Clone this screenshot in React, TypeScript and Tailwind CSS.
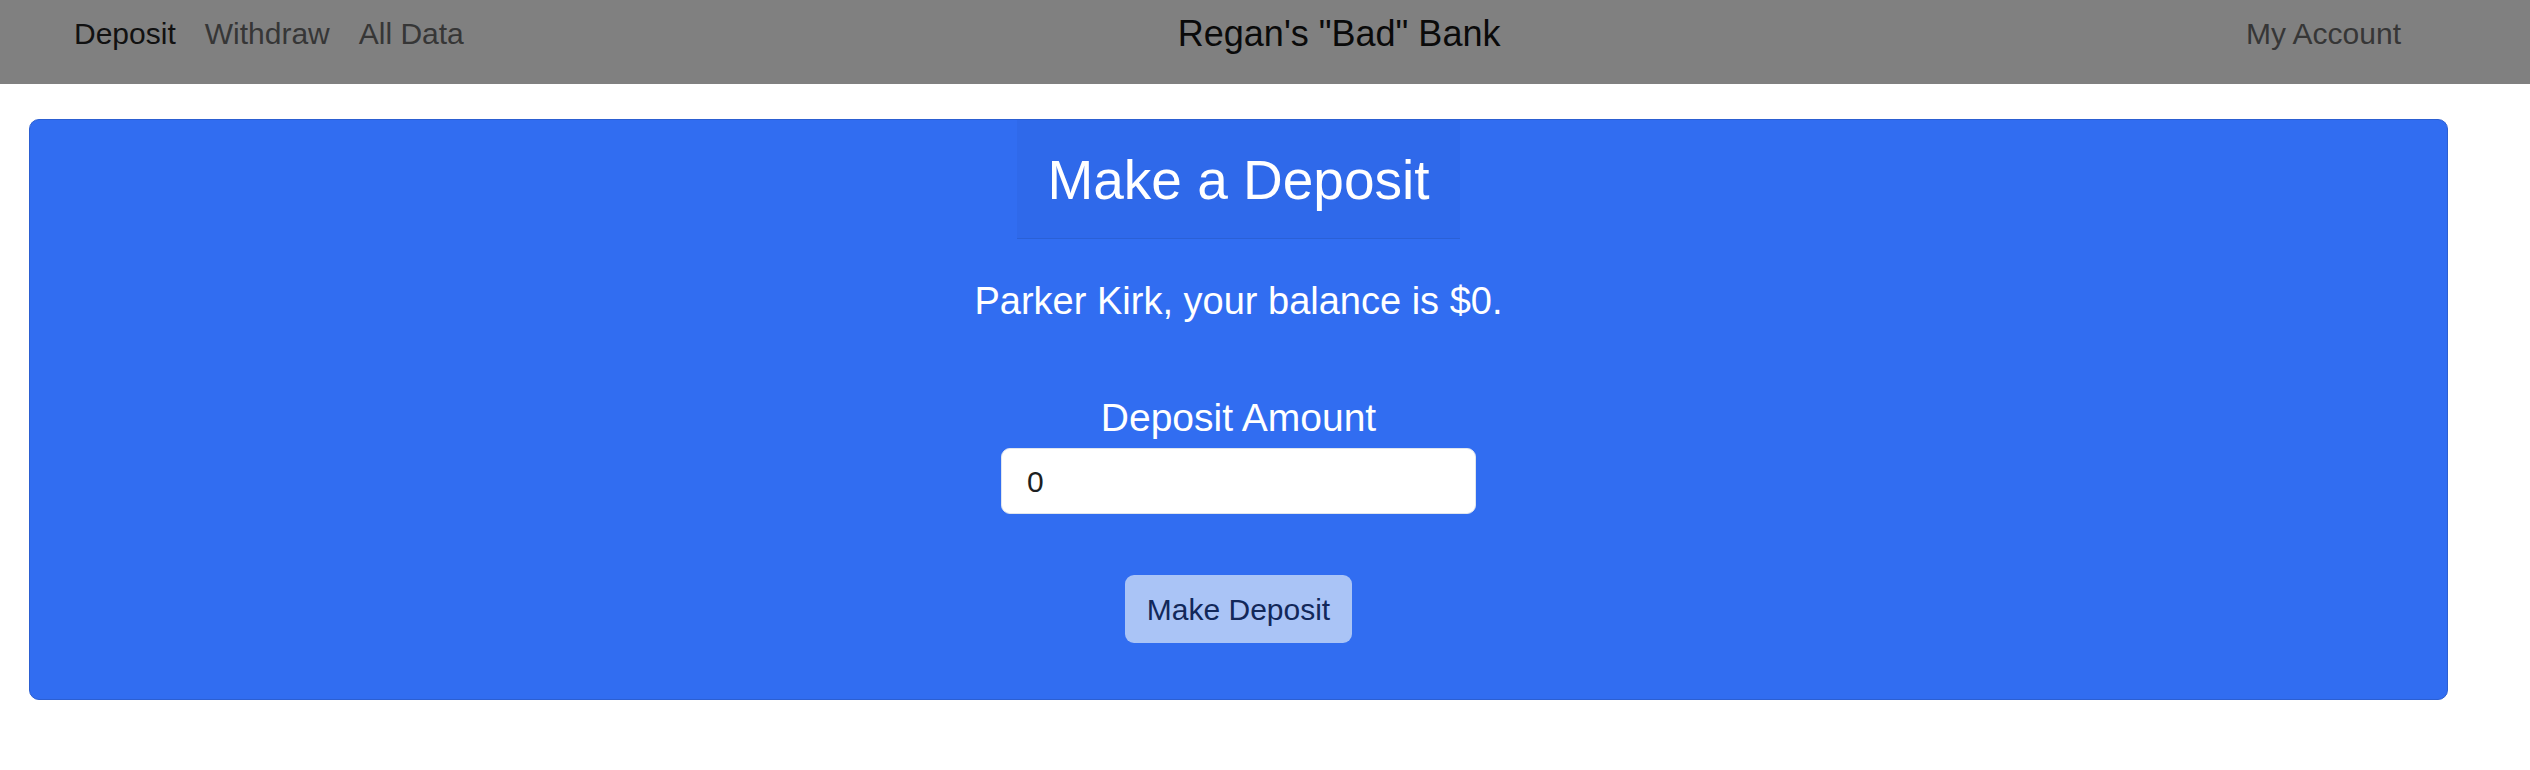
import React from "react";

export default function App() {
  const font = { fontFamily: '"Liberation Sans", Arial, sans-serif' };
  return (
    <div className="min-h-[770px] w-[2530px] bg-white" style={font}>
      <nav className="flex h-[84px] items-start bg-[#808080]">
        <div className="flex gap-[29px] pl-[74px] pt-[14px] text-[30px] leading-[40px]">
          <span className="text-[#111]">Deposit</span>
          <span className="text-[#363636]">Withdraw</span>
          <span className="text-[#363636]">All Data</span>
        </div>
        <div className="ml-[714px] mt-[14px] text-[36px] leading-[40px] text-[#0a0a0a]">
          Regan's "Bad" Bank
        </div>
        <div className="ml-auto pr-[129px] pt-[14px] text-[30px] leading-[40px] text-[#363636]">
          My Account
        </div>
      </nav>

      <div className="pl-[29px] pt-[35px]">
        <div className="flex h-[581px] w-[2419px] flex-col items-center rounded-[10px] border border-[#2c5fd2] bg-[#316df1]">
          <div className="border-b border-[#2a60d6] bg-[#2f69ea] px-[30px] pt-[30px] pb-[28px]">
            <h1 className="text-[55px] leading-[60px] text-white">Make a Deposit</h1>
          </div>
          <p className="mt-[40px] text-[38px] leading-[44px] text-white">
            Parker Kirk, your balance is $0.
          </p>
          <label className="mt-[73px] text-[39px] leading-[44px] text-white">
            Deposit Amount
          </label>
          <div className="mt-[8px] flex h-[66px] w-[475px] items-center rounded-[9px] border border-[#dfe5ee] bg-white pl-[25px] text-[30px] text-[#1d1f22]">
            0
          </div>
          <button className="mt-[61px] h-[68px] w-[227px] rounded-[9px] bg-[#aac4f6] text-[30px] text-[#12285a]">
            Make Deposit
          </button>
        </div>
      </div>
    </div>
  );
}
